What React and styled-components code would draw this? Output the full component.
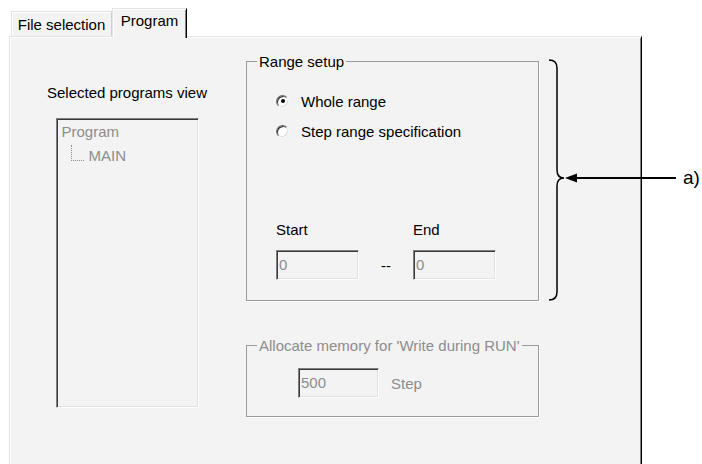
import React from "react";
import styled, { createGlobalStyle } from "styled-components";

const GlobalStyle = createGlobalStyle`
  html, body {
    margin: 0;
    padding: 0;
    background: #fff;
  }
  body {
    font-family: "Liberation Sans", Arial, sans-serif;
    font-size: 15px;
    color: #000;
    overflow: hidden;
  }
`;

const Page = styled.div`
  position: relative;
  width: 702px;
  height: 464px;
  overflow: hidden;
`;

const Window = styled.div`
  display: flex;
  flex-direction: column;
  width: 633px;
  padding: 8px 0 0 9px;
`;

const TabStrip = styled.div`
  position: relative;
  z-index: 1;
  display: flex;
  align-items: flex-end;
  height: 28px;
  padding-left: 2px;
`;

const Tab = styled.div`
  box-sizing: border-box;
  width: ${({ $w }) => $w}px;
  height: ${({ $active }) => ($active ? 30 : 25)}px;
  margin-bottom: ${({ $active }) => ($active ? -2 : 0)}px;
  padding-top: ${({ $active }) => ($active ? 3 : 4)}px;
  text-align: center;
  line-height: 17px;
  background: #f3f3f3;
  border-top: 1px solid #e2e2e2;
  border-left: 1px solid #e2e2e2;
  border-right: 1px solid ${({ $active }) => ($active ? "#000" : "#cfcfcf")};
  box-shadow: inset 1px 1px 0 #fff
    ${({ $active }) => ($active ? ", inset -1px 0 0 #808080" : "")};
`;

const Panel = styled.div`
  position: relative;
  box-sizing: border-box;
  height: 440px;
  display: grid;
  grid-template-columns: 174px 293px;
  column-gap: 32px;
  align-items: start;
  padding-left: 30px;
  background: #f3f3f3;
  border-top: 1px solid #e2e2e2;
  border-left: 1px solid #e2e2e2;
  border-right: 1px solid #000;
  box-shadow: inset 1px 1px 0 #fff, inset -1px 0 0 #808080;
`;

const LeftCol = styled.div`
  display: flex;
  flex-direction: column;
  align-items: center;
  padding-top: 47px;
`;

const Caption = styled.div`
  line-height: 17px;
  white-space: nowrap;
`;

const TreeBox = styled.div`
  box-sizing: border-box;
  width: 143px;
  height: 290px;
  margin-top: 17px;
  padding: 4px 0 0 5px;
  color: #8d8d8d;
  background: #f3f3f3;
  border-top: 1px solid #7f7f7f;
  border-left: 1px solid #7f7f7f;
  border-right: 1px solid #fff;
  border-bottom: 1px solid #fff;
  box-shadow: inset 1px 1px 0 #3a3a3a, inset -1px -1px 0 #e0e0e0;
`;

const TreeItem = styled.div`
  line-height: 18px;
`;

const TreeChild = styled.div`
  display: flex;
  align-items: flex-end;
  margin-top: 4px;
  line-height: 18px;
`;

const Connector = styled.span`
  width: 12px;
  height: 15px;
  margin: 0 5px 4px 9px;
  border-left: 1px dotted #8d8d8d;
  border-bottom: 1px dotted #8d8d8d;
`;

const RightCol = styled.div`
  display: flex;
  flex-direction: column;
  padding-top: 16px;
`;

const GroupBox = styled.fieldset`
  box-sizing: border-box;
  width: 293px;
  margin: 0 0 ${({ $gap }) => $gap || 0}px;
  padding: 0;
  border: 1px solid #9a9a9a;
  box-shadow: 1px 1px 0 #fff;
  color: ${({ $disabled }) => ($disabled ? "#8d8d8d" : "#000")};
`;

const Legend = styled.legend`
  margin-left: 10px;
  padding: 0 2px;
  line-height: 17px;
`;

const RangeBody = styled.div`
  padding: 16px 0 20px 29px;
`;

const RadioRow = styled.label`
  display: flex;
  align-items: center;
  gap: 12px;
  height: 30px;
`;

const Radio = styled.span`
  position: relative;
  box-sizing: border-box;
  width: 13px;
  height: 13px;
  border-radius: 50%;
  background: #fff;
  border: 1px solid;
  border-color: #6e6e6e #f8f8f8 #f8f8f8 #6e6e6e;
  box-shadow: inset 1px 1px 0 #2e2e2e, inset -1px -1px 0 #d8d8d8;

  &::after {
    content: "";
    display: ${({ $checked }) => ($checked ? "block" : "none")};
    position: absolute;
    left: 3.5px;
    top: 3.5px;
    width: 4px;
    height: 4px;
    border-radius: 50%;
    background: #000;
  }
`;

const FieldGrid = styled.div`
  display: grid;
  grid-template-columns: 83px 54px 83px;
  grid-template-rows: 17px 30px;
  row-gap: 12px;
  margin-top: 75px;
  line-height: 17px;
`;

const Dash = styled.div`
  display: flex;
  align-items: center;
  justify-content: center;
  line-height: 1;
`;

const Field = styled.div`
  box-sizing: border-box;
  width: ${({ $w }) => $w}px;
  height: 30px;
  padding: 5px 0 0 2px;
  line-height: 17px;
  color: #8d8d8d;
  background: #f3f3f3;
  border-top: 1px solid #7f7f7f;
  border-left: 1px solid #7f7f7f;
  border-right: 1px solid #fff;
  border-bottom: 1px solid #fff;
  box-shadow: inset 1px 1px 0 #3a3a3a, inset -1px -1px 0 #e0e0e0;
`;

const AllocBody = styled.div`
  display: flex;
  align-items: center;
  gap: 12px;
  padding: 14px 0 18px 51px;
`;

const Annotation = styled.svg`
  position: absolute;
  left: 545px;
  top: 50px;
  overflow: visible;
`;

const Marker = styled.span`
  position: absolute;
  left: 683px;
  top: 167px;
  font-size: 19px;
  line-height: 22px;
`;

export default function App() {
  return (
    <Page>
      <GlobalStyle />
      <Window>
        <TabStrip>
          <Tab $w={101}>File selection</Tab>
          <Tab $w={75} $active>
            Program
          </Tab>
        </TabStrip>
        <Panel>
          <LeftCol>
            <Caption>Selected programs view</Caption>
            <TreeBox>
              <TreeItem>Program</TreeItem>
              <TreeChild>
                <Connector />
                MAIN
              </TreeChild>
            </TreeBox>
          </LeftCol>
          <RightCol>
            <GroupBox $gap={36}>
              <Legend>Range setup</Legend>
              <RangeBody>
                <RadioRow>
                  <Radio $checked />
                  Whole range
                </RadioRow>
                <RadioRow>
                  <Radio />
                  Step range specification
                </RadioRow>
                <FieldGrid>
                  <span>Start</span>
                  <span />
                  <span>End</span>
                  <Field $w={83}>0</Field>
                  <Dash>--</Dash>
                  <Field $w={83}>0</Field>
                </FieldGrid>
              </RangeBody>
            </GroupBox>
            <GroupBox $disabled>
              <Legend>Allocate memory for 'Write during RUN'</Legend>
              <AllocBody>
                <Field $w={81}>500</Field>
                <span>Step</span>
              </AllocBody>
            </GroupBox>
          </RightCol>
        </Panel>
      </Window>
      <Annotation width="140" height="256" viewBox="545 50 140 256">
        <path
          d="M549 60 Q557 60 557 68 L557 170 Q557 178 564 178 Q557 178 557 186 L557 292 Q557 300 549 300"
          fill="none"
          stroke="#000"
          strokeWidth="1.5"
        />
        <line x1="574" y1="178" x2="676" y2="178" stroke="#000" strokeWidth="2" />
        <polygon points="565,178 577,173.5 577,182.5" fill="#000" />
      </Annotation>
      <Marker>a)</Marker>
    </Page>
  );
}
